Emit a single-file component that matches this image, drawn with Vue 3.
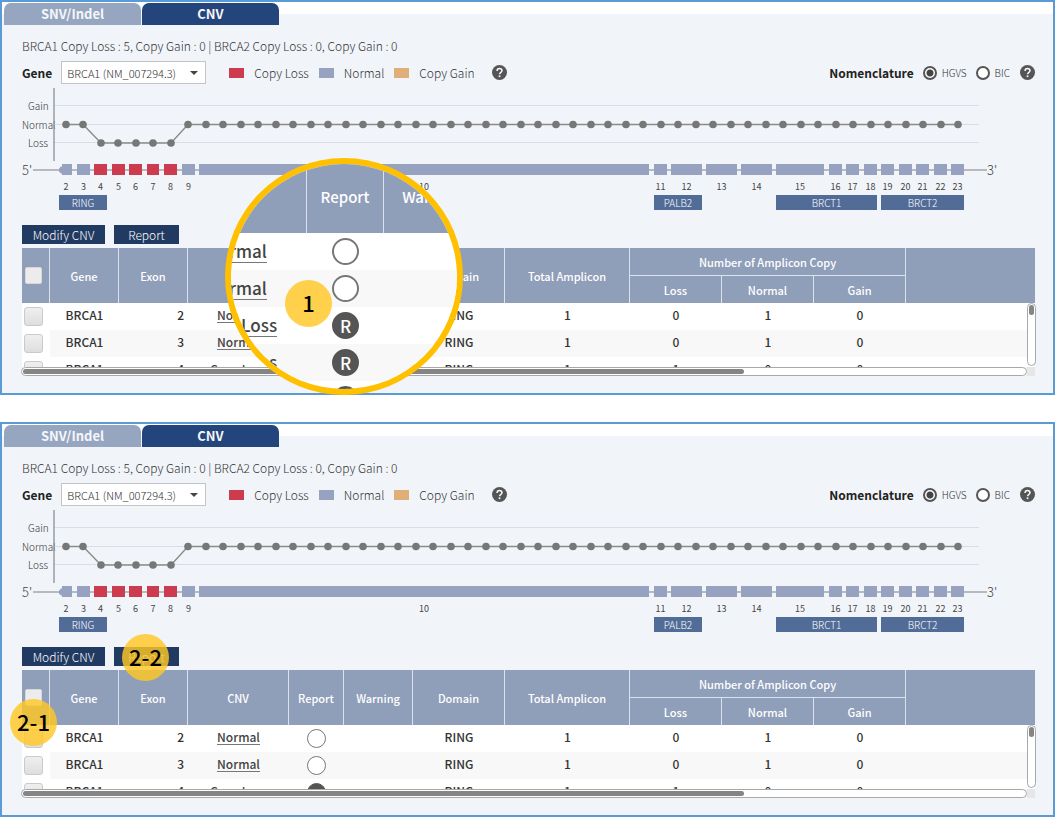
<script setup>
const legend = [
  { label: 'Copy Loss', kind: 'loss' },
  { label: 'Normal', kind: 'normal' },
  { label: 'Copy Gain', kind: 'gain' },
]

const LOSS_FROM = 2
const LOSS_TO = 6
const points = Array.from({ length: 52 }, (_, i) => ({
  x: Math.round(66 + (i * 892) / 51),
  y: i >= LOSS_FROM && i <= LOSS_TO ? 143 : 124.5,
}))
const polyline = points.map((p) => `${p.x},${p.y}`).join(' ')

const levels = [
  { label: 'Gain', x: 28, y: 106 },
  { label: 'Normal', x: 22, y: 125 },
  { label: 'Loss', x: 28, y: 143 },
]

const exons = [
  { n: 2, x: 62, w: 10 },
  { n: 3, x: 77, w: 13 },
  { n: 4, x: 94, w: 13, loss: true },
  { n: 5, x: 112, w: 13, loss: true },
  { n: 6, x: 129, w: 13, loss: true },
  { n: 7, x: 147, w: 12, loss: true },
  { n: 8, x: 164, w: 13, loss: true },
  { n: 9, x: 182, w: 13 },
  { n: 10, x: 199, w: 450 },
  { n: 11, x: 654, w: 13 },
  { n: 12, x: 671, w: 31 },
  { n: 13, x: 706, w: 31 },
  { n: 14, x: 741, w: 31 },
  { n: 15, x: 776, w: 48 },
  { n: 16, x: 829, w: 13 },
  { n: 17, x: 846, w: 13 },
  { n: 18, x: 864, w: 13 },
  { n: 19, x: 881, w: 13 },
  { n: 20, x: 899, w: 13 },
  { n: 21, x: 916, w: 13 },
  { n: 22, x: 934, w: 13 },
  { n: 23, x: 951, w: 13 },
]

const domains = [
  { name: 'RING', x: 59, w: 48 },
  { name: 'PALB2', x: 654, w: 48 },
  { name: 'BRCT1', x: 776, w: 101 },
  { name: 'BRCT2', x: 881, w: 83 },
]

const rows = [
  { gene: 'BRCA1', exon: 2, cnv: 'Normal', reported: false, domain: 'RING', total: 1, loss: 0, normal: 1, gain: 0 },
  { gene: 'BRCA1', exon: 3, cnv: 'Normal', reported: false, domain: 'RING', total: 1, loss: 0, normal: 1, gain: 0 },
  { gene: 'BRCA1', exon: 4, cnv: 'Copy Loss', reported: true, domain: 'RING', total: 1, loss: 1, normal: 0, gain: 0 },
]

const lensRows = [
  { cnv: 'Normal', reported: false },
  { cnv: 'Normal', reported: false },
  { cnv: 'Copy Loss', reported: true },
  { cnv: 'Copy Loss', reported: true },
  { cnv: 'Copy Loss', reported: true },
]

const panels = [
  { id: 'a', lens: true, badges: [{ text: '1', cls: 'badge-lens' }] },
  {
    id: 'b',
    lens: false,
    badges: [
      { text: '2-1', cls: 'badge-select' },
      { text: '2-2', cls: 'badge-report' },
    ],
  },
]
</script>

<template>
  <main class="page">
    <section v-for="panel in panels" :key="panel.id" class="panel">
      <nav class="tabs">
        <button type="button" class="tab">SNV/Indel</button>
        <button type="button" class="tab active">CNV</button>
      </nav>

      <div class="content">
        <p class="summary">BRCA1 Copy Loss : 5, Copy Gain : 0 | BRCA2 Copy Loss : 0, Copy Gain : 0</p>

        <div class="controls">
          <label class="strong" :for="`gene-${panel.id}`">Gene</label>
          <div class="select-wrap">
            <select :id="`gene-${panel.id}`" class="select">
              <option>BRCA1 (NM_007294.3)</option>
            </select>
            <svg class="caret" width="8" height="4" viewBox="0 0 8 4"><path d="M0 0h8L4 4z" fill="#444" /></svg>
          </div>
          <ul class="legend">
            <li v-for="item in legend" :key="item.label">
              <i class="swatch" :class="item.kind"></i>{{ item.label }}
            </li>
          </ul>
          <button type="button" class="help" aria-label="Legend help">
            <svg width="15" height="15" viewBox="0 0 15 15">
              <circle cx="7.5" cy="7.5" r="7.5" fill="#555" />
              <path d="M5 6c0-1.600 1-2.600 2.500-2.600S10 4.300 10 5.700C10 7.300 7.600 7.300 7.600 9.200" fill="none" stroke="#f4f6fa" stroke-width="1.500" />
              <rect x="6.700" y="10.400" width="1.700" height="1.700" fill="#f4f6fa" />
            </svg>
          </button>

          <div class="nomenclature" role="radiogroup" :aria-labelledby="`nom-label-${panel.id}`">
            <span :id="`nom-label-${panel.id}`" class="strong">Nomenclature</span>
            <label class="choice"><input type="radio" :name="`nom-${panel.id}`" checked />HGVS</label>
            <label class="choice"><input type="radio" :name="`nom-${panel.id}`" />BIC</label>
            <button type="button" class="help" aria-label="Nomenclature help">
              <svg width="15" height="15" viewBox="0 0 15 15">
                <circle cx="7.5" cy="7.5" r="7.5" fill="#555" />
                <path d="M5 6c0-1.600 1-2.600 2.500-2.600S10 4.300 10 5.700C10 7.300 7.600 7.300 7.600 9.200" fill="none" stroke="#f4f6fa" stroke-width="1.500" />
                <rect x="6.700" y="10.400" width="1.700" height="1.700" fill="#f4f6fa" />
              </svg>
            </button>
          </div>
        </div>

        <svg class="chart" width="976" height="128" viewBox="22 85 976 128">
          <text v-for="l in levels" :key="l.label" class="level" :x="l.x" :y="l.y + 4">{{ l.label }}</text>
          <path d="M54 105.500H979M54 124.500H979M54 142.500H979" stroke="#dadde3" />
          <path d="M54 88V161" stroke="#8c8f96" stroke-width="1.300" />
          <polyline :points="polyline" fill="none" stroke="#8a8a8a" stroke-width="1.300" />
          <circle v-for="p in points" :key="p.x" :cx="p.x" :cy="p.y" r="3.800" fill="#777" />

          <path d="M33 170H987" stroke="#a3a6a8" stroke-width="1.300" />
          <text class="end" x="22" y="175">5'</text>
          <text class="end" x="987" y="175">3'</text>
          <path d="M63 166.500h-2l-2 2v3l2 2h2z" fill="#97a2c1" />
          <g v-for="e in exons" :key="e.n">
            <rect :x="e.x" y="164" :width="e.w" height="11" :fill="e.loss ? '#cc3b4e' : '#97a2c1'" />
            <text class="exon" :x="e.n === 2 ? 66 : e.x + e.w / 2" y="190">{{ e.n }}</text>
          </g>
          <g v-for="d in domains" :key="d.name">
            <rect :x="d.x" y="195" :width="d.w" height="15" fill="#526c98" />
            <text class="domain" :x="d.x + d.w / 2" y="207">{{ d.name }}</text>
          </g>
        </svg>

        <div class="actions">
          <button type="button" class="action modify">Modify CNV</button>
          <button type="button" class="action report">Report</button>
        </div>

        <div class="grid">
          <div class="viewport">
            <table class="data">
              <colgroup>
                <col class="c28" /><col class="c69" /><col class="c69" /><col class="c101" /><col class="c55" />
                <col class="c69" /><col class="c92" /><col class="c125" /><col class="c92" /><col class="c92" />
                <col class="c92" /><col />
              </colgroup>
              <thead>
                <tr>
                  <th rowspan="2" class="pick"><input type="checkbox" class="box head" aria-label="Select all" /></th>
                  <th rowspan="2">Gene</th>
                  <th rowspan="2">Exon</th>
                  <th rowspan="2">CNV</th>
                  <th rowspan="2">Report</th>
                  <th rowspan="2">Warning</th>
                  <th rowspan="2">Domain</th>
                  <th rowspan="2">Total Amplicon</th>
                  <th colspan="3" class="group">Number of Amplicon Copy</th>
                  <th rowspan="2" class="last"></th>
                </tr>
                <tr>
                  <th>Loss</th>
                  <th>Normal</th>
                  <th>Gain</th>
                </tr>
              </thead>
              <tbody>
                <tr v-for="r in rows" :key="r.exon">
                  <td class="pick"><input type="checkbox" class="box" :aria-label="`Select exon ${r.exon}`" /></td>
                  <td>{{ r.gene }}</td>
                  <td class="num">{{ r.exon }}</td>
                  <td><a href="#" class="cnv">{{ r.cnv }}</a></td>
                  <td class="flag"><span class="mark" :class="{ on: r.reported }">{{ r.reported ? 'R' : '' }}</span></td>
                  <td></td>
                  <td>{{ r.domain }}</td>
                  <td>{{ r.total }}</td>
                  <td>{{ r.loss }}</td>
                  <td>{{ r.normal }}</td>
                  <td>{{ r.gain }}</td>
                  <td></td>
                </tr>
              </tbody>
            </table>
          </div>
          <div class="vbar"><i></i></div>
          <div class="hrow">
            <div class="hbar"><i></i></div>
          </div>
        </div>
      </div>

      <div v-if="panel.lens" class="lens">
        <table class="zoomed">
          <thead>
            <tr>
              <th class="z-cnv"></th>
              <th class="z-report">Report</th>
              <th class="z-warning">Warning</th>
              <th class="z-rest"></th>
            </tr>
          </thead>
          <tbody>
            <tr v-for="(r, i) in lensRows" :key="i">
              <td><a href="#" class="cnv">{{ r.cnv }}</a></td>
              <td class="flag"><span class="mark big" :class="{ on: r.reported }">{{ r.reported ? 'R' : '' }}</span></td>
              <td></td>
              <td></td>
            </tr>
          </tbody>
        </table>
      </div>
      <span v-for="b in panel.badges" :key="b.text" class="badge" :class="b.cls">{{ b.text }}</span>
    </section>
  </main>
</template>

<style>
body {
  margin: 0;
  background: #fff;
}
</style>

<style scoped>
* {
  box-sizing: border-box;
}
.page {
  display: flex;
  flex-direction: column;
  gap: 27px;
  font-family: "Noto Sans CJK KR", "Noto Sans", sans-serif;
  font-size: 12px;
  color: #333;
}
button,
input,
select {
  font-family: inherit;
  margin: 0;
}
.panel {
  position: relative;
  border: 2px solid #5b9bd5;
  background: linear-gradient(#fff 12px, #f1f5fa 12px);
}
.tabs {
  display: flex;
  gap: 1px;
  padding: 1px 2px 0;
}
.tab {
  width: 137px;
  height: 22px;
  padding: 0;
  border: 0;
  border-radius: 7px 7px 0 0;
  background: #96a6c0;
  color: #f4f6fa;
  font-size: 13px;
  font-weight: 700;
  line-height: 22px;
}
.tab.active {
  background: #24457c;
}
.content {
  padding: 11px 18px 17px 20px;
}
.summary {
  margin: 0;
  line-height: 20px;
  font-weight: 300;
}
.controls {
  display: flex;
  align-items: center;
  height: 23px;
  margin-top: 5px;
}
.strong {
  font-weight: 700;
  color: #222;
}
.select-wrap {
  position: relative;
  margin-left: 9px;
}
.select {
  display: block;
  appearance: none;
  width: 145px;
  height: 23px;
  padding: 0 20px 0 5px;
  border: 1px solid #c4c4c4;
  border-radius: 0;
  background: #fff;
  color: #333;
  font-size: 11px;
  font-weight: 300;
}
.caret {
  position: absolute;
  right: 8px;
  top: 10px;
  pointer-events: none;
}
.legend {
  display: flex;
  gap: 10px;
  margin: 0 0 0 23px;
  padding: 0;
  list-style: none;
  font-weight: 300;
}
.legend li {
  display: flex;
  align-items: center;
  gap: 10px;
}
.swatch {
  width: 15px;
  height: 10px;
}
.swatch.loss {
  background: #cc3b4e;
}
.swatch.normal {
  background: #97a2c1;
}
.swatch.gain {
  background: #e0ae78;
}
.help {
  display: flex;
  padding: 0;
  border: 0;
  background: none;
  margin-left: 17px;
}
.nomenclature {
  display: flex;
  align-items: center;
  margin-left: auto;
}
.choice {
  display: flex;
  align-items: center;
  gap: 5px;
  margin-left: 9px;
  font-size: 10px;
  font-weight: 300;
}
.choice input {
  appearance: none;
  width: 14px;
  height: 14px;
  border: 2px solid #555;
  border-radius: 50%;
  background: #fff;
}
.choice input:checked {
  background: radial-gradient(circle, #444 3px, #fff 4px);
}
.nomenclature .help {
  margin-left: 10px;
}
.chart {
  display: block;
  margin-top: 1px;
}
.level {
  font-size: 10px;
  font-weight: 300;
  fill: #333;
}
.end {
  font-size: 13px;
  font-weight: 300;
  fill: #444;
}
.exon {
  font-size: 9px;
  text-anchor: middle;
  fill: #444;
}
.domain {
  font-size: 10px;
  font-weight: 300;
  text-anchor: middle;
  fill: #fff;
}
.actions {
  display: flex;
  gap: 9px;
  margin-top: 12px;
}
.action {
  height: 19px;
  padding: 0;
  border: 0;
  background: #213a61;
  color: #fff;
  font-size: 12px;
  font-weight: 300;
  line-height: 19px;
}
.modify {
  width: 83px;
}
.report {
  width: 65px;
}
.grid {
  position: relative;
  margin-top: 4px;
}
.viewport {
  height: 119px;
  overflow: hidden;
  background: #fff;
}
.data {
  width: 100%;
  table-layout: fixed;
  border-collapse: separate;
  border-spacing: 0;
  line-height: 20px;
}
.c28 { width: 28px; }
.c55 { width: 55px; }
.c69 { width: 69px; }
.c92 { width: 92px; }
.c101 { width: 101px; }
.c125 { width: 125px; }
th {
  padding: 0;
  background: #8f9eb9;
  border-right: 1px solid #dbe2ee;
  color: #fff;
  font-size: 11px;
  font-weight: 500;
}
.data th {
  height: 27px;
}
.data th.group {
  height: 28px;
  border-bottom: 1px solid #dbe2ee;
}
th.last {
  border-right: 0;
}
td {
  padding: 0 0 3px;
  text-align: center;
  color: #333;
  font-weight: 500;
}
.data td {
  height: 27px;
}
tbody tr:nth-child(even) td:not(.pick) {
  background: #f8f8f8;
}
td.num {
  padding-right: 4px;
  text-align: right;
}
td.flag {
  padding: 0;
}
th.pick,
td.pick {
  padding: 0 0 0 2px;
  text-align: left;
}
.box {
  display: block;
  appearance: none;
  width: 19px;
  height: 19px;
  border: 1px solid #cacaca;
  border-radius: 3px;
  background: linear-gradient(#efefef, #dedede);
}
.box.head {
  width: 17px;
  height: 17px;
  border-color: #d8d8d8;
  border-radius: 2px;
  margin-left: 1px;
  background: #ececec;
}
.cnv {
  display: inline-block;
  color: #444;
  text-decoration: none;
  line-height: 15px;
  border-bottom: 1px solid #777;
}
.mark {
  display: block;
  width: 19px;
  height: 19px;
  margin: 0 auto;
  border: 1px solid #777;
  border-radius: 50%;
  background: #fff;
  color: #fff;
  font-size: 12px;
  line-height: 17px;
}
.mark.on {
  border-color: #555;
  background: #555;
}
.vbar {
  position: absolute;
  top: 55px;
  right: -1px;
  width: 9px;
  height: 63px;
  border: 1px solid #a8a8a8;
  border-radius: 5px;
  background: #fff;
  padding: 1px;
}
.vbar i {
  display: block;
  height: 10px;
  border-radius: 3px;
  background: #858585;
}
.hrow {
  margin-left: -1px;
  padding-right: 8px;
  background: linear-gradient(#e6e6e6, #e6e6e6) right / 8px 100% no-repeat;
}
.hbar {
  height: 9px;
  border: 1px solid #a8a8a8;
  border-radius: 5px;
  background: #fff;
  padding: 1px;
}
.hbar i {
  display: block;
  width: 72%;
  height: 5px;
  border-radius: 3px;
  background: #858585;
}
.lens {
  position: absolute;
  left: 223px;
  top: 156px;
  width: 238px;
  height: 237px;
  display: flex;
  justify-content: center;
  overflow: hidden;
  border: 6px solid #ffc000;
  border-radius: 50%;
  background: #fff;
}
.zoomed {
  flex: none;
  align-self: flex-start;
  width: 356px;
  table-layout: fixed;
  border-collapse: separate;
  border-spacing: 0;
  font-size: 17px;
}
.zoomed th {
  height: 69px;
  padding-bottom: 4px;
  font-size: 15px;
}
.z-cnv { width: 141px; }
.z-report { width: 77px; }
.z-warning { width: 97px; }
.zoomed td {
  height: 37px;
}
.zoomed .cnv {
  line-height: 22px;
}
.mark.big {
  width: 27px;
  height: 27px;
  border-width: 2px;
  font-size: 17px;
  line-height: 23px;
}
.badge {
  position: absolute;
  width: 47px;
  height: 47px;
  border-radius: 50%;
  background: rgba(255, 199, 36, 0.82);
  color: #000;
  font-size: 22px;
  font-weight: 500;
  line-height: 44px;
  text-align: center;
}
.badge-lens {
  left: 283px;
  top: 278px;
}
.badge-select {
  left: 8px;
  top: 275px;
}
.badge-report {
  left: 120px;
  top: 210px;
}
</style>
